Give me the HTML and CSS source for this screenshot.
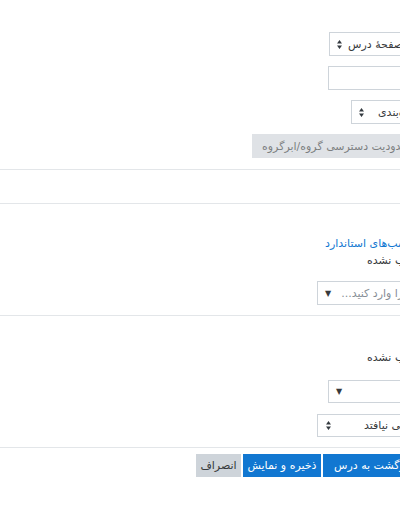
FILE: index.html
```html
<!DOCTYPE html>
<html lang="fa">

<head>
    <meta charset="UTF-8">
    <meta name="viewport" content="width=device-width, initial-scale=1.0">
    <title>ویرایش تنظیمات</title>
    <link rel="stylesheet" href="styles.css">
</head>

<body>
    <form class="mform" dir="rtl">
        <div class="section general">
            <div class="fitem">
                <div class="custom-select sel-visible">
                    <span class="sel-text">نمایش در صفحهٔ درس</span>
                    <svg class="updown" width="5" height="9" viewBox="0 0 5 9"><path d="M2.5 0L5 3.6H0z M2.5 9L0 5.4h5z" fill="#343a40"/></svg>
                </div>
            </div>
            <div class="fitem">
                <input class="form-control idnumber" type="text">
            </div>
            <div class="fitem">
                <div class="custom-select sel-groups">
                    <span class="sel-text">بدون گروه‌بندی</span>
                    <svg class="updown" width="5" height="9" viewBox="0 0 5 9"><path d="M2.5 0L5 3.6H0z M2.5 9L0 5.4h5z" fill="#343a40"/></svg>
                </div>
            </div>
            <div class="fitem">
                <button type="button" class="btn btn-secondary btn-restrict" disabled>افزودن محدودیت دسترسی گروه/ابرگروه</button>
            </div>
        </div>

        <div class="section collapsed"></div>

        <div class="section tags">
            <div class="static tags-link"><a href="#">مدیریت برچسب‌های استاندارد</a></div>
            <div class="static nosel">هیچ موردی انتخاب نشده</div>
            <div class="autocomplete tags-input">
                <span class="placeholder">برچسب‌ها را وارد کنید...</span>
                <span class="downarrow">▼</span>
            </div>
        </div>

        <div class="section competencies">
            <div class="static nosel">هیچ موردی انتخاب نشده</div>
            <div class="autocomplete comp-input">
                <span class="placeholder"></span>
                <span class="downarrow">▼</span>
            </div>
            <div class="custom-select sel-completion">
                <span class="sel-text">هیچ اتفاقی نیافتد</span>
                <svg class="updown" width="5" height="9" viewBox="0 0 5 9"><path d="M2.5 0L5 3.6H0z M2.5 9L0 5.4h5z" fill="#343a40"/></svg>
            </div>
        </div>

        <div class="buttons">
            <button type="button" class="btn btn-primary btn-return">ذخیره و بازگشت به درس</button>
            <button type="button" class="btn btn-primary btn-display">ذخیره و نمایش</button>
            <button type="button" class="btn btn-secondary btn-cancel">انصراف</button>
        </div>
    </form>
</body>

</html>
```

FILE: styles.css
```css
* {
    margin: 0;
    padding: 0;
    box-sizing: border-box;
}

html,
body {
    overflow: hidden;
}

body {
    background: #fff;
    color: #373a3c;
    font-family: "DejaVu Sans", sans-serif;
    font-size: 11px;
}

/* the form runs wider than the window, its right side is cut off */
.mform {
    width: 620px;
    direction: rtl;
}

.section {
    border-bottom: 1px solid #e3e6e9;
    padding-right: 20px;
}

.general {
    padding-top: 32px;
    padding-bottom: 11px;
}

.fitem {
    display: flex;
    margin-bottom: 10px;
}

.fitem:last-child {
    margin-bottom: 0;
}

.collapsed {
    height: 34px;
}

.tags {
    padding-top: 31px;
    padding-bottom: 10px;
}

.competencies {
    padding-top: 33px;
    padding-bottom: 10px;
}

.static {
    height: 17px;
    line-height: 17px;
    text-align: left;
    white-space: nowrap;
}

.tags-link {
    width: 275px;
}

.tags-link a {
    color: #1177d1;
    text-decoration: none;
}

.nosel {
    width: 233px;
}

.custom-select,
.autocomplete {
    display: flex;
    align-items: center;
    justify-content: flex-end;
    height: 24px;
    border: 1px solid #ced4da;
    border-radius: 0;
    padding-left: 7px;
    white-space: nowrap;
}

.updown {
    flex: none;
}

.sel-visible {
    width: 271px;
    gap: 6px;
}

.sel-groups {
    width: 249px;
    gap: 14px;
}

.sel-completion {
    width: 283px;
    height: 23px;
    margin-top: 11px;
    padding-left: 8px;
    gap: 33px;
}

.form-control {
    display: block;
    height: 24px;
    border: 1px solid #ced4da;
    background: #fff;
    font: inherit;
}

.idnumber {
    width: 272px;
}

.tags-input {
    width: 283px;
    margin-top: 12px;
    gap: 10px;
}

.comp-input {
    width: 272px;
    height: 23px;
    margin-top: 14px;
}

.downarrow {
    font-size: 8px;
    color: #373a3c;
}

.placeholder {
    color: #868e96;
}

.btn {
    display: block;
    height: 23px;
    border: 1px solid transparent;
    font: inherit;
    white-space: nowrap;
}

.btn-primary {
    background: #1177d1;
    border-color: #1177d1;
    color: #fff;
}

.btn-secondary {
    background: #ced4da;
    border-color: #ced4da;
    color: #373a3c;
}

.btn:disabled {
    opacity: 0.65;
}

.btn-restrict {
    width: 348px;
    height: 24px;
    text-align: left;
    padding-left: 9px;
}

.buttons {
    display: flex;
    gap: 2px;
    margin-top: 6px;
    padding-right: 20px;
}

.btn-return {
    width: 277px;
    text-align: left;
    padding-left: 10px;
}

.btn-display {
    width: 78px;
}

.btn-cancel {
    width: 45px;
}
```
